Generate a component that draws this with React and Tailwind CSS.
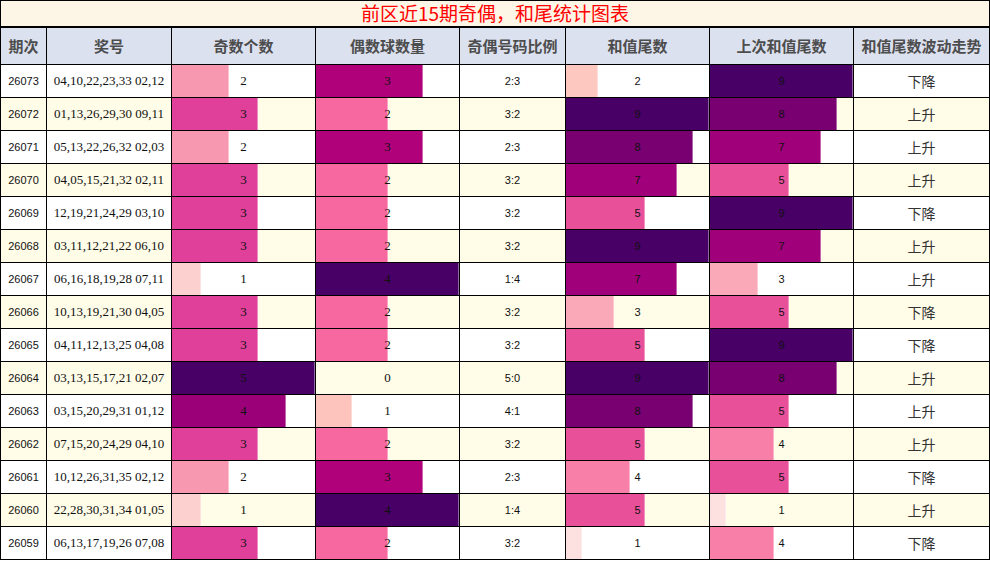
// 前区近15期奇偶，和尾统计图表

const ROWS = [
  [26073, "04,10,22,23,33 02,12", 2, 3, "2:3", 2, 9, "下降"],
  [26072, "01,13,26,29,30 09,11", 3, 2, "3:2", 9, 8, "上升"],
  [26071, "05,13,22,26,32 02,03", 2, 3, "2:3", 8, 7, "上升"],
  [26070, "04,05,15,21,32 02,11", 3, 2, "3:2", 7, 5, "上升"],
  [26069, "12,19,21,24,29 03,10", 3, 2, "3:2", 5, 9, "下降"],
  [26068, "03,11,12,21,22 06,10", 3, 2, "3:2", 9, 7, "上升"],
  [26067, "06,16,18,19,28 07,11", 1, 4, "1:4", 7, 3, "上升"],
  [26066, "10,13,19,21,30 04,05", 3, 2, "3:2", 3, 5, "下降"],
  [26065, "04,11,12,13,25 04,08", 3, 2, "3:2", 5, 9, "下降"],
  [26064, "03,13,15,17,21 02,07", 5, 0, "5:0", 9, 8, "上升"],
  [26063, "03,15,20,29,31 01,12", 4, 1, "4:1", 8, 5, "上升"],
  [26062, "07,15,20,24,29 04,10", 3, 2, "3:2", 5, 4, "上升"],
  [26061, "10,12,26,31,35 02,12", 2, 3, "2:3", 4, 5, "下降"],
  [26060, "22,28,30,31,34 01,05", 1, 4, "1:4", 5, 1, "上升"],
  [26059, "06,13,17,19,26 07,08", 3, 2, "3:2", 1, 4, "下降"],
];

const ODD = { 1: "#fdd0d0", 2: "#f898b0", 3: "#e0409a", 4: "#9c0078", 5: "#480066" };
const EVEN = { 1: "#fcc4bc", 2: "#f868a0", 3: "#b0007a", 4: "#480066" };
const TAIL = { 1: "#fde0e0", 2: "#fcc8c0", 3: "#f9a9b8", 4: "#f880a8", 5: "#e8509a", 6: "#c8207f", 7: "#a0007a", 8: "#780070", 9: "#480066" };

const HEADERS = ["期次", "奖号", "奇数个数", "偶数球数量", "奇偶号码比例", "和值尾数", "上次和值尾数", "和值尾数波动走势"];

const serif = "font-['Liberation_Serif','Times_New_Roman',serif] text-[13px] text-[#111]";
const sans = "font-['Liberation_Sans',Arial,sans-serif] text-[11px] text-[#111]";
const cjk = "font-['Noto_Sans_CJK_SC',sans-serif]";

function BarCell({ value, max, colors, bg, font }) {
  const pct = (value / max) * 100;
  return (
    <div className={"grid " + bg}>
      <div className="[grid-area:1/1] h-full flex">
        {value > 0 && (
          <div className="h-full border-r border-white/40" style={{ width: pct + "%", background: colors[value] }} />
        )}
      </div>
      <div className={"[grid-area:1/1] flex items-center justify-center " + font}>{value}</div>
    </div>
  );
}

export default function App() {
  return (
    <div className="w-[990px] h-[561px] bg-white">
      <div className="bg-black p-px flex flex-col">
        <div className={"h-[25px] mb-[2px] bg-[#fdf5e6] flex items-center justify-center text-[19px] text-[#ff0000] " + cjk}>
          前区近15期奇偶，和尾统计图表
        </div>
        <div className="grid grid-cols-[45px_124px_143px_143px_105px_143px_143px_135px] grid-rows-[36px_repeat(15,32px)] gap-px">
          {HEADERS.map((h) => (
            <div key={h} className={"bg-[#dce1f0] flex items-center justify-center text-[15px] font-bold text-[#4d4d4d] " + cjk}>
              {h}
            </div>
          ))}
          {ROWS.map((r, i) => {
            const bg = i % 2 === 0 ? "bg-white" : "bg-[#fffce8]";
            return [
              <div key={r[0] + "a"} className={"flex items-center justify-center " + bg + " " + sans}>{r[0]}</div>,
              <div key={r[0] + "b"} className={"flex items-center justify-center " + bg + " " + serif}>{r[1]}</div>,
              <BarCell key={r[0] + "c"} value={r[2]} max={5} colors={ODD} bg={bg} font={serif} />,
              <BarCell key={r[0] + "d"} value={r[3]} max={4} colors={EVEN} bg={bg} font={serif} />,
              <div key={r[0] + "e"} className={"flex items-center justify-center " + bg + " " + sans}>{r[4]}</div>,
              <BarCell key={r[0] + "f"} value={r[5]} max={9} colors={TAIL} bg={bg} font={sans} />,
              <BarCell key={r[0] + "g"} value={r[6]} max={9} colors={TAIL} bg={bg} font={sans} />,
              <div key={r[0] + "h"} className={"flex items-center justify-center text-[14px] text-[#333] " + bg + " " + cjk}>{r[7]}</div>,
            ];
          })}
        </div>
      </div>
    </div>
  );
}
